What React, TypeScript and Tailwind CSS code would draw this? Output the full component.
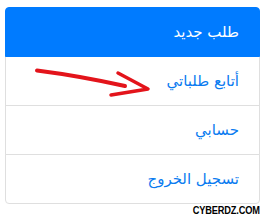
const items = [
  { label: "طلب جديد", active: true },
  { label: "أتابع طلباتي", active: false },
  { label: "حسابي", active: false },
  { label: "تسجيل الخروج", active: false },
];

export default function App() {
  return (
    <div className="w-[266px] h-[215px] bg-white overflow-hidden pt-[7px] pl-[5px]">
      <div className="relative w-[255px]">
        <ul dir="rtl" className="flex flex-col" style={{ fontFamily: '"DejaVu Sans", sans-serif' }}>
          {items.map((item, i) => (
            <li
              key={item.label}
              className={`px-5 py-3 text-[15px] leading-6 border ${
                i === 0 ? "rounded-t-[4px]" : "-mt-px"
              } ${i === items.length - 1 ? "rounded-b-[4px]" : ""} ${
                item.active
                  ? "bg-[#007bff] border-[#007bff] text-white relative z-10"
                  : "bg-white border-[#dfdfdf] text-[#0a7bf0]"
              }`}
            >
              {item.label}
            </li>
          ))}
        </ul>

        {/* red hand-drawn arrow over the second row */}
        <svg
          className="absolute left-[-5px] top-[-7px] pointer-events-none"
          width="160"
          height="110"
          viewBox="0 0 160 110"
          fill="none"
        >
          <path d="M37 70.5 Q80 76 125 86" stroke="#e3141b" strokeWidth="4" strokeLinecap="round" />
          <path d="M118 73 L148 89 L111 95" stroke="#e3141b" strokeWidth="3.5" strokeLinecap="round" strokeLinejoin="round" />
        </svg>
      </div>
      <div className="w-[255px] flex justify-end mt-[1px]">
        <span
          className="inline-block origin-right scale-x-[0.84] text-[11px] leading-[11px] font-black text-black tracking-[-0.2px]"
          style={{ fontFamily: '"Liberation Sans", Arial, sans-serif' }}
        >
          CYBERDZ.COM
        </span>
      </div>
    </div>
  );
}
